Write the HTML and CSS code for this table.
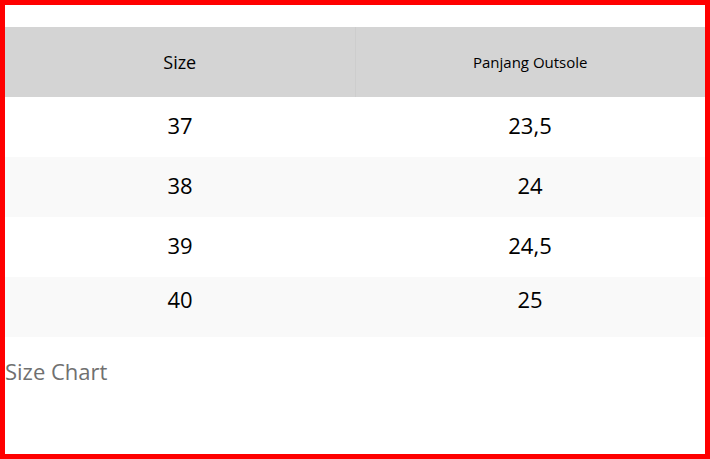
FILE: index.html
```html
<!DOCTYPE html>
<html>
<head>
<meta charset="utf-8">
<link rel="stylesheet" href="styles.css">
</head>
<body>
<div class="frame">
  <table class="chart">
    <thead>
      <tr><th class="col-size">Size</th><th class="col-len">Panjang Outsole</th></tr>
    </thead>
    <tbody>
      <tr><td>37</td><td>23,5</td></tr>
      <tr class="alt"><td>38</td><td>24</td></tr>
      <tr><td>39</td><td>24,5</td></tr>
      <tr class="alt last"><td>40</td><td>25</td></tr>
    </tbody>
  </table>
  <p class="caption">Size Chart</p>
</div>
</body>
</html>
```
FILE: styles.css
```css
html, body {
  margin: 0;
  padding: 0;
  background: #fff;
}
.frame {
  box-sizing: border-box;
  width: 710px;
  height: 459px;
  border: 5px solid #ff0000;
  padding-top: 22px;
  font-family: "Open Sans", "Noto Sans", sans-serif;
  color: #000;
}
.chart {
  width: 700px;
  border-collapse: collapse;
  table-layout: fixed;
}
.chart th {
  background: #d4d4d4;
  height: 70px;
  padding: 0;
  font-weight: 400;
  text-align: center;
  vertical-align: middle;
}
.chart th.col-size {
  font-size: 18px;
  border-right: 1px solid #cdcdcd;
}
.chart th.col-len {
  font-size: 15px;
}
.chart td {
  height: 56px;
  padding: 0 0 4px 0;
  text-align: center;
  vertical-align: middle;
  font-size: 22px;
}
.chart tr.alt td {
  background: #f9f9f9;
}
.chart tr.last td {
  height: 43px;
  padding-bottom: 17px;
}
.caption {
  margin: 19px 0 0 0;
  font-size: 22px;
  line-height: 30px;
  color: #707070;
}
```
